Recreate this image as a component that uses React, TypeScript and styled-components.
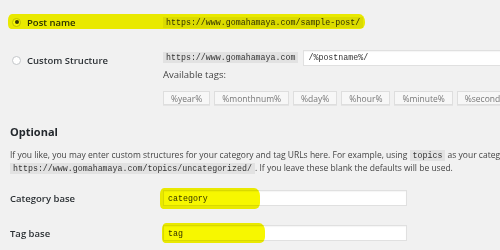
import styled, { createGlobalStyle } from 'styled-components';

const GlobalStyle = createGlobalStyle`
  html, body {
    margin: 0;
    padding: 0;
    background: #f1f1f1;
    overflow: hidden;
  }
  body {
    font-family: "Open Sans", "Liberation Sans", sans-serif;
    color: #23282d;
  }
`;

const TAGS = ['%year%', '%monthnum%', '%day%', '%hour%', '%minute%', '%second%'];

export default function App() {
  return (
    <>
      <GlobalStyle />
      <Page>
        <Row $top={15} $height={14}>
          <Marker $left={-2} $top={-1} $width={357} $height={15} />
          <Choice>
            <Radio $checked />
            <ChoiceText>Post name</ChoiceText>
          </Choice>
          <Cell>
            <Code>https://www.gomahamaya.com/sample-post/</Code>
          </Cell>
        </Row>

        <Row $top={21} $height={15} $alignTop>
          <Choice $pad={4}>
            <Radio />
            <ChoiceText>Custom Structure</ChoiceText>
          </Choice>
          <Cell>
            <StructureLine>
              <Code>https://www.gomahamaya.com</Code>
              <TextInput $width={240}>/%postname%/</TextInput>
            </StructureLine>
            <TagsLabel>Available tags:</TagsLabel>
            <TagList>
              {TAGS.map((tag) => (
                <TagButton key={tag}>{tag}</TagButton>
              ))}
            </TagList>
          </Cell>
        </Row>

        <Heading>Optional</Heading>
        <Description>
          If you like, you may enter custom structures for your category and tag URLs here. For
          example, using <InlineCode>topics</InlineCode> as your category base would make your
          category links like{' '}
          <br />
          <InlineCode>https://www.gomahamaya.com/topics/uncategorized/</InlineCode>. If you leave
          these blank the defaults will be used.
        </Description>

        <Row $top={16} $height={16}>
          <FieldLabel>Category base</FieldLabel>
          <Cell>
            <Marker $left={-3} $top={-2} $width={100} $height={21} />
            <TextInput $width={244}>category</TextInput>
          </Cell>
        </Row>

        <Row $top={19} $height={16}>
          <FieldLabel>Tag base</FieldLabel>
          <Cell>
            <Marker $left={-1} $top={-2} $width={103} $height={20} />
            <TextInput $width={244}>tag</TextInput>
          </Cell>
        </Row>
      </Page>
    </>
  );
}

const Page = styled.div`
  width: 500px;
  height: 250px;
  padding-left: 10px;
  box-sizing: border-box;
  overflow: hidden;
`;

const Row = styled.div<{ $top: number; $height: number; $alignTop?: boolean }>`
  position: relative;
  display: grid;
  grid-template-columns: 153px 1fr;
  align-items: ${(p) => (p.$alignTop ? 'start' : 'center')};
  margin-top: ${(p) => p.$top}px;
  min-height: ${(p) => p.$height}px;
`;

const Cell = styled.div`
  position: relative;
  display: flex;
  flex-direction: column;
  align-items: flex-start;
  min-width: 0;
`;

const Marker = styled.div<{ $left: number; $top: number; $width: number; $height: number }>`
  position: absolute;
  left: ${(p) => p.$left}px;
  top: ${(p) => p.$top}px;
  width: ${(p) => p.$width}px;
  height: ${(p) => p.$height}px;
  background: #f7f700;
  border-radius: 4px 6px 5px 3px / 6px 8px 6px 5px;
  mix-blend-mode: multiply;
  pointer-events: none;
  z-index: 2;
`;

const Choice = styled.label<{ $pad?: number }>`
  display: flex;
  align-items: center;
  gap: 6px;
  padding-left: 2px;
  padding-top: ${(p) => p.$pad ?? 0}px;
`;

const Radio = styled.span<{ $checked?: boolean }>`
  width: 9px;
  height: 9px;
  border-radius: 50%;
  border: 1px solid #c4c7ca;
  background: #fff;
  box-sizing: border-box;
  display: flex;
  align-items: center;
  justify-content: center;

  &::after {
    content: '';
    width: 4px;
    height: 4px;
    border-radius: 50%;
    background: ${(p) => (p.$checked ? '#3a3a3a' : 'transparent')};
  }
`;

const ChoiceText = styled.span`
  font-size: 9.5px;
  font-weight: 600;
  color: #2c3135;
`;

const FieldLabel = styled.span`
  font-size: 9.5px;
  font-weight: 600;
  color: #2c3135;
`;

const Code = styled.code`
  font-family: "Liberation Mono", "DejaVu Sans Mono", monospace;
  font-size: 8.3px;
  line-height: 11px;
  padding: 0 3px;
  background: rgba(0, 0, 0, 0.06);
  color: #333;
  white-space: nowrap;
`;

const StructureLine = styled.div`
  display: flex;
  align-items: center;
  gap: 5px;
  height: 15px;
`;

const TextInput = styled.div<{ $width: number }>`
  width: ${(p) => p.$width}px;
  height: 16px;
  box-sizing: border-box;
  background: #fff;
  border: 1px solid #e0e0e0;
  box-shadow: inset 0 1px 1px rgba(0, 0, 0, 0.04);
  padding: 0 4px;
  display: flex;
  align-items: center;
  font-family: "Liberation Mono", "DejaVu Sans Mono", monospace;
  font-size: 8.3px;
  color: #333;
  flex-shrink: 0;
  white-space: nowrap;
`;

const TagsLabel = styled.div`
  margin-top: 4px;
  font-size: 9.5px;
  line-height: 12px;
  color: #444;
`;

const TagList = styled.div`
  display: flex;
  gap: 4px;
  margin-top: 10px;
  white-space: nowrap;
`;

const TagButton = styled.span`
  height: 14px;
  box-sizing: border-box;
  padding: 0 7px;
  display: flex;
  align-items: center;
  background: #f7f7f7;
  border: 1px solid #dedede;
  box-shadow: 0 1px 0 #e4e4e4;
  font-size: 8.5px;
  color: #777;
  flex-shrink: 0;
`;

const Heading = styled.h2`
  margin: 20px 0 0;
  font-size: 11px;
  line-height: 14px;
  font-weight: 700;
  color: #23282d;
`;

const Description = styled.p`
  margin: 10px 0 0;
  font-size: 8.5px;
  line-height: 11.5px;
  color: #444;
  white-space: nowrap;
`;

const InlineCode = styled.code`
  font-family: "Liberation Mono", "DejaVu Sans Mono", monospace;
  font-size: 8.3px;
  padding: 1px 3px;
  background: rgba(0, 0, 0, 0.06);
  color: #333;
`;
